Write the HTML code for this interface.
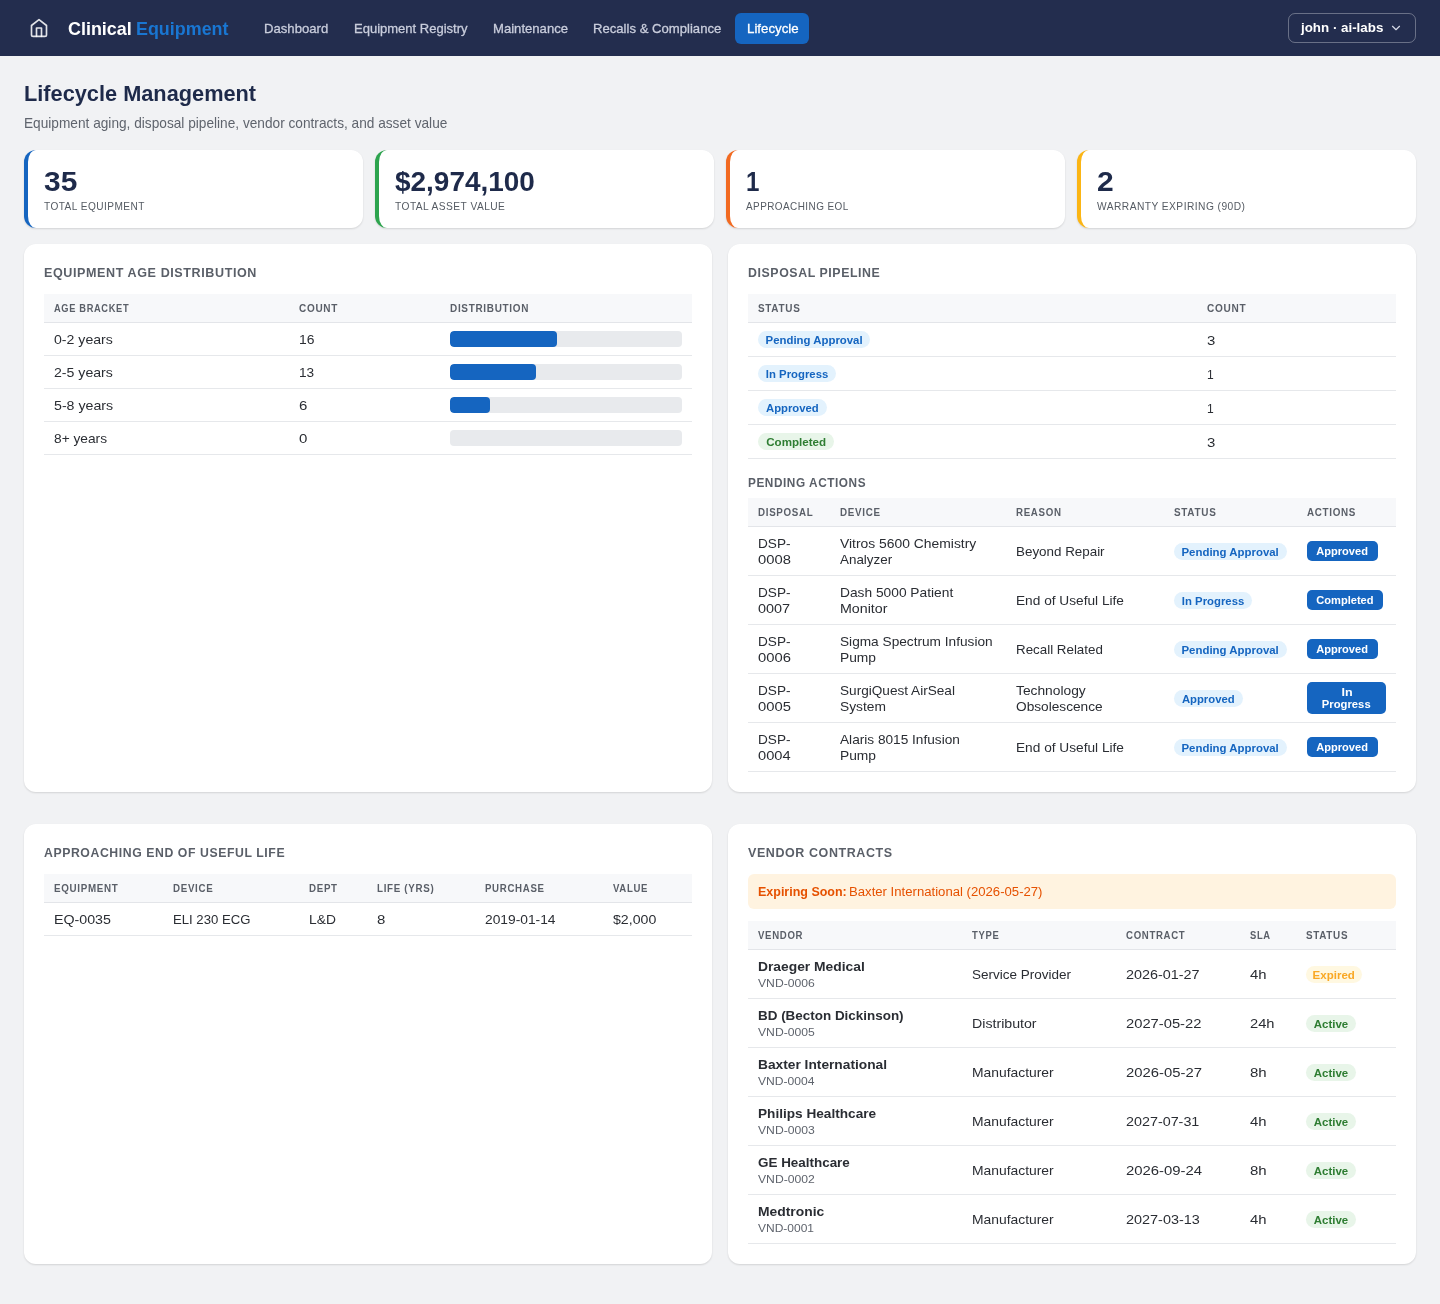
<!DOCTYPE html>
<html lang="en">
<head>
<meta charset="utf-8">
<title>Clinical Equipment - Lifecycle</title>
<style>
*{box-sizing:border-box;margin:0;padding:0}
html,body{width:1440px;height:1304px;overflow:hidden}
body{font-family:"Liberation Sans",sans-serif;background:#f1f2f4;color:#2a2d33;position:relative;font-size:13.4px;line-height:16px}
#root{position:absolute;left:0;top:0;width:1440px;height:1304px;will-change:transform}
.abs{position:absolute;white-space:nowrap}
.sx{display:inline-block;white-space:nowrap;transform-origin:0 50%}
.cx{display:inline-block;white-space:nowrap;transform-origin:50% 50%}
/* NAV */
.nav{position:absolute;left:0;top:0;width:1440px;height:56px;background:#232d4e}
.nav .home{position:absolute;left:29px;top:18px;width:20px;height:20px}
.brand{left:68px;top:0;height:56px;line-height:56px;font-size:18.4px;font-weight:700;color:#fff}
.brand.bl{color:#1976d2}
.nl{top:0;height:56px;line-height:56px;font-size:13.33px;color:#c9cddc;-webkit-text-stroke:.3px #c9cddc}
.nact{position:absolute;left:735px;top:12.5px;width:74px;height:31.5px;border-radius:6px;background:#1565c0}
.user{position:absolute;left:1288px;top:13px;width:128px;height:30px;border:1px solid rgba(255,255,255,.32);border-radius:7px}
.user .ut{position:absolute;left:12px;top:0;line-height:28px;font-size:13.4px;font-weight:700;color:#fff;white-space:nowrap}
.user svg{position:absolute;left:100px;top:7px;width:14px;height:14px}
/* HEADINGS */
h1{position:absolute;left:24px;top:78px;font-size:22.4px;line-height:30px;font-weight:700;color:#1e2a4a;white-space:nowrap}
.sub{left:24px;top:114px;font-size:14.3px;line-height:16px;color:#5f646d}
/* STAT CARDS */
.stat{position:absolute;top:150px;width:339px;height:78px;background:#fff;border-radius:12px;border-left:4px solid #1565c0;box-shadow:0 1px 2px rgba(0,0,0,.13)}
.stat .num{position:absolute;left:16px;top:14px;font-size:26.8px;line-height:32px;font-weight:700;color:#1e2a4a;white-space:nowrap}
.stat .lbl{position:absolute;left:16px;top:49px;font-size:10.2px;line-height:14px;color:#555b63;white-space:nowrap;letter-spacing:.45px}
/* CARDS */
.card{position:absolute;background:#fff;border-radius:12px;box-shadow:0 1px 2px rgba(0,0,0,.13)}
.card h3{position:absolute;left:20px;letter-spacing:.6px;font-size:12.8px;line-height:16px;font-weight:700;color:#5a5f68;white-space:nowrap}
table{position:absolute;left:20px;width:648px;border-collapse:separate;border-spacing:0;table-layout:fixed}
th{height:29px;background:#f7f8fa;border-bottom:1px solid #e3e5e9;letter-spacing:.7px;font-size:10px;font-weight:700;color:#5a5f68;text-align:left;padding:0 10px;vertical-align:middle;white-space:nowrap}
td{border-bottom:1px solid #e6e8eb;padding:0 10px;vertical-align:middle;font-size:13.4px;line-height:16px;color:#2a2d33;white-space:nowrap}
tr.r33 td{height:33px}
tr.r34 td{height:34px}
tr.r49 td{height:49px}
.bar{width:232px;height:16px;border-radius:4px;background:#e8eaed;overflow:hidden}
.bar i{display:block;height:16px;background:#1565c0;border-radius:4px}
.bdg{display:inline-block;height:17px;line-height:17px;border-radius:9px;font-size:11.3px;font-weight:700;white-space:nowrap;vertical-align:middle;text-align:center}
.b-blue{background:#e3f2fd;color:#1565c0}
.b-green{background:#e8f5e9;color:#2e7d32}
.b-yel{background:#fff8e1;color:#f9a825}
.btn{display:inline-block;background:#1565c0;color:#fff;font-size:11.2px;font-weight:700;line-height:12.5px;padding:3.5px 0;border-radius:5px;text-align:center;vertical-align:middle}
.vn{font-weight:700;display:block;line-height:16px}
.vs{display:block;font-size:11.2px;line-height:16px;color:#5f646d}
.alert{position:absolute;left:20px;top:50px;width:648px;height:34.5px;border-radius:6px;background:#fff3e0;color:#e65100;font-size:12.3px;line-height:34.5px;padding:0 10px;white-space:nowrap}
</style>
</head>
<body>
<div id="root">
<div class="nav">
  <svg class="home" viewBox="0 0 24 24" fill="none" stroke="rgba(255,255,255,.87)" stroke-width="2" stroke-linecap="round" stroke-linejoin="round"><path d="m3 9 9-7 9 7v11a2 2 0 0 1-2 2H5a2 2 0 0 1-2-2z"/><polyline points="9 22 9 12 15 12 15 22"/></svg>
  <div class="abs brand" style="left:68px"><span class="sx" style="transform:translateY(1px) scaleX(0.9748)">Clinical</span></div>
  <div class="abs brand bl" style="left:136px"><span class="sx" style="transform:translateY(1px) scaleX(0.9733)">Equipment</span></div>
  <div class="abs nl" style="left:264px"><span class="sx" style="transform:translateY(1px) scaleX(0.9843)">Dashboard</span></div>
  <div class="abs nl" style="left:353.5px"><span class="sx" style="transform:translateY(1px) scaleX(0.9761)">Equipment Registry</span></div>
  <div class="abs nl" style="left:493px"><span class="sx" style="transform:translateY(1px) scaleX(0.9833)">Maintenance</span></div>
  <div class="abs nl" style="left:593px"><span class="sx" style="transform:translateY(1px) scaleX(0.9841)">Recalls &amp; Compliance</span></div>
  <div class="nact"></div>
  <div class="abs nl" style="left:746.5px;color:#fff;-webkit-text-stroke-color:#fff"><span class="sx" style="transform:translateY(1px) scaleX(0.9950)">Lifecycle</span></div>
  <div class="user"><span class="ut"><span class="sx" style="transform:scaleX(0.9970)">john &middot; ai-labs</span></span><svg viewBox="0 0 24 24" fill="none" stroke="#d5d9e6" stroke-width="2" stroke-linecap="round" stroke-linejoin="round"><path d="m6 9 6 6 6-6"/></svg></div>
</div>

<h1><span class="sx" style="transform:translateY(1px) scaleX(0.9715)">Lifecycle Management</span></h1>
<div class="abs sub"><span class="sx" style="transform:translateY(1px) scaleX(0.9563)">Equipment aging, disposal pipeline, vendor contracts, and asset value</span></div>

<div class="stat" style="left:24px"><div class="num"><span class="sx" style="transform:translateY(1.5px) scaleX(1.1158)">35</span></div><div class="lbl"><span class="sx" style="transform:translateY(1px) scaleX(0.9926)">TOTAL EQUIPMENT</span></div></div>
<div class="stat" style="left:375px;border-left-color:#2da44e"><div class="num"><span class="sx" style="transform:translateY(1.5px) scaleX(1.0433)">$2,974,100</span></div><div class="lbl"><span class="sx" style="transform:translateY(1px) scaleX(1.0023)">TOTAL ASSET VALUE</span></div></div>
<div class="stat" style="left:726px;border-left-color:#f26a21"><div class="num"><span class="sx" style="transform:translateY(1.5px) scaleX(0.9000)">1</span></div><div class="lbl"><span class="sx" style="transform:translateY(1px) scaleX(0.9761)">APPROACHING EOL</span></div></div>
<div class="stat" style="left:1077px;border-left-color:#fbb514"><div class="num"><span class="sx" style="transform:translateY(1.5px) scaleX(1.1200)">2</span></div><div class="lbl"><span class="sx" style="transform:translateY(1px) scaleX(1.0034)">WARRANTY EXPIRING (90D)</span></div></div>

<!-- CARD 1 -->
<div class="card" style="left:24px;top:244px;width:688px;height:548px">
  <h3 style="top:20px"><span class="sx" style="transform:translateY(1px) scaleX(0.9814)">EQUIPMENT AGE DISTRIBUTION</span></h3>
  <table style="top:50px">
    <colgroup><col style="width:245px"><col style="width:151px"><col style="width:252px"></colgroup>
    <tr><th><span class="sx" style="transform:translateY(1px) scaleX(0.9281)">AGE BRACKET</span></th><th><span class="sx" style="transform:translateY(1px) scaleX(1.0000)">COUNT</span></th><th><span class="sx" style="transform:translateY(1px) scaleX(0.9948)">DISTRIBUTION</span></th></tr>
    <tr class="r33"><td><span class="sx" style="transform:translateY(1px) scaleX(1.0548)">0-2 years</span></td><td><span class="sx" style="transform:translateY(1px) scaleX(1.0377)">16</span></td><td><div class="bar"><i style="width:107px"></i></div></td></tr>
    <tr class="r33"><td><span class="sx" style="transform:translateY(1px) scaleX(1.0550)">2-5 years</span></td><td><span class="sx" style="transform:translateY(1px) scaleX(1.0189)">13</span></td><td><div class="bar"><i style="width:86px"></i></div></td></tr>
    <tr class="r33"><td><span class="sx" style="transform:translateY(1px) scaleX(1.0594)">5-8 years</span></td><td><span class="sx" style="transform:translateY(1px) scaleX(1.1200)">6</span></td><td><div class="bar"><i style="width:40px"></i></div></td></tr>
    <tr class="r33"><td><span class="sx" style="transform:translateY(1px) scaleX(1.0246)">8+ years</span></td><td><span class="sx" style="transform:translateY(1px) scaleX(1.1200)">0</span></td><td><div class="bar"></div></td></tr>
  </table>
</div>

<!-- CARD 2 -->
<div class="card" style="left:728px;top:244px;width:688px;height:548px">
  <h3 style="top:20px"><span class="sx" style="transform:translateY(1px) scaleX(0.9649)">DISPOSAL PIPELINE</span></h3>
  <table style="top:50px">
    <colgroup><col style="width:449px"><col style="width:199px"></colgroup>
    <tr><th><span class="sx" style="transform:translateY(1px) scaleX(0.9940)">STATUS</span></th><th><span class="sx" style="transform:translateY(1px) scaleX(1.0066)">COUNT</span></th></tr>
    <tr class="r34"><td><span class="bdg b-blue" style="width:111.5px"><span class="cx" style="transform:translateY(1px) scaleX(1.0079)">Pending Approval</span></span></td><td><span class="sx" style="transform:translateY(1px) scaleX(1.1154)">3</span></td></tr>
    <tr class="r34"><td><span class="bdg b-blue" style="width:77.5px"><span class="cx" style="transform:translateY(1px) scaleX(1.0041)">In Progress</span></span></td><td><span class="sx" style="transform:translateY(1px) scaleX(0.9000)">1</span></td></tr>
    <tr class="r34"><td><span class="bdg b-blue" style="width:68.75px"><span class="cx" style="transform:translateY(1px) scaleX(1.0000)">Approved</span></span></td><td><span class="sx" style="transform:translateY(1px) scaleX(0.9000)">1</span></td></tr>
    <tr class="r34"><td><span class="bdg b-green" style="width:75.75px"><span class="cx" style="transform:translateY(1px) scaleX(1.0262)">Completed</span></span></td><td><span class="sx" style="transform:translateY(1px) scaleX(1.1154)">3</span></td></tr>
  </table>
  <h3 style="top:230px"><span class="sx" style="transform:translateY(1px) scaleX(0.9228)">PENDING ACTIONS</span></h3>
  <table style="top:254px">
    <colgroup><col style="width:82px"><col style="width:176px"><col style="width:158px"><col style="width:133px"><col style="width:99px"></colgroup>
    <tr><th><span class="sx" style="transform:translateY(1px) scaleX(0.9773)">DISPOSAL</span></th><th><span class="sx" style="transform:translateY(1px) scaleX(0.9811)">DEVICE</span></th><th><span class="sx" style="transform:translateY(1px) scaleX(0.9722)">REASON</span></th><th><span class="sx" style="transform:translateY(1px) scaleX(0.9940)">STATUS</span></th><th><span class="sx" style="transform:translateY(1px) scaleX(0.9845)">ACTIONS</span></th></tr>
    <tr class="r49"><td><span class="sx" style="transform:translateY(1px) scaleX(1.0164)">DSP-</span><br><span class="sx" style="transform:translateY(1px) scaleX(1.1043)">0008</span></td><td><span class="sx" style="transform:translateY(1px) scaleX(1.0361)">Vitros 5600 Chemistry</span><br><span class="sx" style="transform:translateY(1px) scaleX(1.0000)">Analyzer</span></td><td><span class="sx" style="transform:translateY(1px) scaleX(1.0000)">Beyond Repair</span></td><td><span class="bdg b-blue" style="width:112.5px"><span class="cx" style="transform:translateY(1px) scaleX(1.0106)">Pending Approval</span></span></td><td><span class="btn" style="width:71px"><span class="cx" style="transform:scaleX(0.9902)">Approved</span></span></td></tr>
    <tr class="r49"><td><span class="sx" style="transform:translateY(1px) scaleX(1.0164)">DSP-</span><br><span class="sx" style="transform:translateY(1px) scaleX(1.0783)">0007</span></td><td><span class="sx" style="transform:translateY(1px) scaleX(1.0275)">Dash 5000 Patient</span><br><span class="sx" style="transform:translateY(1px) scaleX(1.0632)">Monitor</span></td><td><span class="sx" style="transform:translateY(1px) scaleX(1.0216)">End of Useful Life</span></td><td><span class="bdg b-blue" style="width:77.5px"><span class="cx" style="transform:translateY(1px) scaleX(1.0041)">In Progress</span></span></td><td><span class="btn" style="width:76px"><span class="cx" style="transform:scaleX(0.9912)">Completed</span></span></td></tr>
    <tr class="r49"><td><span class="sx" style="transform:translateY(1px) scaleX(1.0164)">DSP-</span><br><span class="sx" style="transform:translateY(1px) scaleX(1.1043)">0006</span></td><td><span class="sx" style="transform:translateY(1px) scaleX(1.0202)">Sigma Spectrum Infusion</span><br><span class="sx" style="transform:translateY(1px) scaleX(1.0299)">Pump</span></td><td><span class="sx" style="transform:translateY(1px) scaleX(0.9971)">Recall Related</span></td><td><span class="bdg b-blue" style="width:112.5px"><span class="cx" style="transform:translateY(1px) scaleX(1.0106)">Pending Approval</span></span></td><td><span class="btn" style="width:71px"><span class="cx" style="transform:scaleX(0.9902)">Approved</span></span></td></tr>
    <tr class="r49"><td><span class="sx" style="transform:translateY(1px) scaleX(1.0164)">DSP-</span><br><span class="sx" style="transform:translateY(1px) scaleX(1.1043)">0005</span></td><td><span class="sx" style="transform:translateY(1px) scaleX(1.0157)">SurgiQuest AirSeal</span><br><span class="sx" style="transform:translateY(1px) scaleX(1.0289)">System</span></td><td><span class="sx" style="transform:translateY(1px) scaleX(1.0296)">Technology</span><br><span class="sx" style="transform:translateY(1px) scaleX(1.0209)">Obsolescence</span></td><td><span class="bdg b-blue" style="width:68.5px"><span class="cx" style="transform:translateY(1px) scaleX(1.0000)">Approved</span></span></td><td><span class="btn" style="width:79px"><span class="cx" style="transform:scaleX(1.1200)">In</span><br><span class="cx" style="transform:scaleX(1.0053)">Progress</span></span></td></tr>
    <tr class="r49"><td><span class="sx" style="transform:translateY(1px) scaleX(1.0164)">DSP-</span><br><span class="sx" style="transform:translateY(1px) scaleX(1.0948)">0004</span></td><td><span class="sx" style="transform:translateY(1px) scaleX(1.0193)">Alaris 8015 Infusion</span><br><span class="sx" style="transform:translateY(1px) scaleX(1.0299)">Pump</span></td><td><span class="sx" style="transform:translateY(1px) scaleX(1.0216)">End of Useful Life</span></td><td><span class="bdg b-blue" style="width:112.5px"><span class="cx" style="transform:translateY(1px) scaleX(1.0106)">Pending Approval</span></span></td><td><span class="btn" style="width:71px"><span class="cx" style="transform:scaleX(0.9902)">Approved</span></span></td></tr>
  </table>
</div>

<!-- CARD 3 -->
<div class="card" style="left:24px;top:824px;width:688px;height:440px">
  <h3 style="top:20px"><span class="sx" style="transform:translateY(1px) scaleX(0.9581)">APPROACHING END OF USEFUL LIFE</span></h3>
  <table style="top:50px">
    <colgroup><col style="width:119px"><col style="width:136px"><col style="width:68px"><col style="width:108px"><col style="width:128px"><col style="width:89px"></colgroup>
    <tr><th><span class="sx" style="transform:translateY(1px) scaleX(0.9805)">EQUIPMENT</span></th><th><span class="sx" style="transform:translateY(1px) scaleX(0.9748)">DEVICE</span></th><th><span class="sx" style="transform:translateY(1px) scaleX(0.9732)">DEPT</span></th><th><span class="sx" style="transform:translateY(1px) scaleX(0.9780)">LIFE (YRS)</span></th><th><span class="sx" style="transform:translateY(1px) scaleX(0.9667)">PURCHASE</span></th><th><span class="sx" style="transform:translateY(1px) scaleX(0.9577)">VALUE</span></th></tr>
    <tr class="r33"><td><span class="sx" style="transform:translateY(1px) scaleX(1.0625)">EQ-0035</span></td><td><span class="sx" style="transform:translateY(1px) scaleX(0.9805)">ELI 230 ECG</span></td><td><span class="sx" style="transform:translateY(1px) scaleX(1.0306)">L&amp;D</span></td><td><span class="sx" style="transform:translateY(1px) scaleX(1.1200)">8</span></td><td><span class="sx" style="transform:translateY(1px) scaleX(1.0296)">2019-01-14</span></td><td><span class="sx" style="transform:translateY(1px) scaleX(1.0559)">$2,000</span></td></tr>
  </table>
</div>

<!-- CARD 4 -->
<div class="card" style="left:728px;top:824px;width:688px;height:440px">
  <h3 style="top:20px"><span class="sx" style="transform:translateY(1px) scaleX(0.9762)">VENDOR CONTRACTS</span></h3>
  <div class="alert"><b><span class="sx" style="transform:translateY(1px) scaleX(1.0146)">Expiring Soon:</span></b><span style="position:absolute;left:101px;top:0"><span class="sx" style="transform:translateY(1px) scaleX(1.0682)">Baxter International (2026-05-27)</span></span></div>
  <table style="top:97px">
    <colgroup><col style="width:214px"><col style="width:154px"><col style="width:124px"><col style="width:56px"><col style="width:100px"></colgroup>
    <tr><th><span class="sx" style="transform:translateY(1px) scaleX(0.9620)">VENDOR</span></th><th><span class="sx" style="transform:translateY(1px) scaleX(0.9464)">TYPE</span></th><th><span class="sx" style="transform:translateY(1px) scaleX(0.9630)">CONTRACT</span></th><th><span class="sx" style="transform:translateY(1px) scaleX(0.9405)">SLA</span></th><th><span class="sx" style="transform:translateY(1px) scaleX(0.9880)">STATUS</span></th></tr>
    <tr class="r49"><td><span class="vn"><span class="sx" style="transform:translateY(1px) scaleX(1.0319)">Draeger Medical</span></span><span class="vs"><span class="sx" style="transform:translateY(1px) scaleX(1.0870)">VND-0006</span></span></td><td><span class="sx" style="transform:translateY(1px) scaleX(1.0077)">Service Provider</span></td><td><span class="sx" style="transform:translateY(1px) scaleX(1.0743)">2026-01-27</span></td><td><span class="sx" style="transform:translateY(1px) scaleX(1.1091)">4h</span></td><td><span class="bdg b-yel" style="width:56.25px"><span class="cx" style="transform:translateY(1px) scaleX(1.0188)">Expired</span></span></td></tr>
    <tr class="r49"><td><span class="vn"><span class="sx" style="transform:translateY(1px) scaleX(1.0035)">BD (Becton Dickinson)</span></span><span class="vs"><span class="sx" style="transform:translateY(1px) scaleX(1.0870)">VND-0005</span></span></td><td><span class="sx" style="transform:translateY(1px) scaleX(1.0586)">Distributor</span></td><td><span class="sx" style="transform:translateY(1px) scaleX(1.1004)">2027-05-22</span></td><td><span class="sx" style="transform:translateY(1px) scaleX(1.0964)">24h</span></td><td><span class="bdg b-green" style="width:49.5px"><span class="cx" style="transform:translateY(1px) scaleX(1.0150)">Active</span></span></td></tr>
    <tr class="r49"><td><span class="vn"><span class="sx" style="transform:translateY(1px) scaleX(1.0262)">Baxter International</span></span><span class="vs"><span class="sx" style="transform:translateY(1px) scaleX(1.0817)">VND-0004</span></span></td><td><span class="sx" style="transform:translateY(1px) scaleX(1.0354)">Manufacturer</span></td><td><span class="sx" style="transform:translateY(1px) scaleX(1.1078)">2026-05-27</span></td><td><span class="sx" style="transform:translateY(1px) scaleX(1.1200)">8h</span></td><td><span class="bdg b-green" style="width:49.5px"><span class="cx" style="transform:translateY(1px) scaleX(1.0150)">Active</span></span></td></tr>
    <tr class="r49"><td><span class="vn"><span class="sx" style="transform:translateY(1px) scaleX(1.0174)">Philips Healthcare</span></span><span class="vs"><span class="sx" style="transform:translateY(1px) scaleX(1.0870)">VND-0003</span></span></td><td><span class="sx" style="transform:translateY(1px) scaleX(1.0354)">Manufacturer</span></td><td><span class="sx" style="transform:translateY(1px) scaleX(1.0706)">2027-07-31</span></td><td><span class="sx" style="transform:translateY(1px) scaleX(1.1091)">4h</span></td><td><span class="bdg b-green" style="width:49.5px"><span class="cx" style="transform:translateY(1px) scaleX(1.0150)">Active</span></span></td></tr>
    <tr class="r49"><td><span class="vn"><span class="sx" style="transform:translateY(1px) scaleX(1.0028)">GE Healthcare</span></span><span class="vs"><span class="sx" style="transform:translateY(1px) scaleX(1.0870)">VND-0002</span></span></td><td><span class="sx" style="transform:translateY(1px) scaleX(1.0354)">Manufacturer</span></td><td><span class="sx" style="transform:translateY(1px) scaleX(1.1111)">2026-09-24</span></td><td><span class="sx" style="transform:translateY(1px) scaleX(1.1200)">8h</span></td><td><span class="bdg b-green" style="width:49.5px"><span class="cx" style="transform:translateY(1px) scaleX(1.0150)">Active</span></span></td></tr>
    <tr class="r49"><td><span class="vn"><span class="sx" style="transform:translateY(1px) scaleX(1.0359)">Medtronic</span></span><span class="vs"><span class="sx" style="transform:translateY(1px) scaleX(1.0725)">VND-0001</span></span></td><td><span class="sx" style="transform:translateY(1px) scaleX(1.0354)">Manufacturer</span></td><td><span class="sx" style="transform:translateY(1px) scaleX(1.0781)">2027-03-13</span></td><td><span class="sx" style="transform:translateY(1px) scaleX(1.1091)">4h</span></td><td><span class="bdg b-green" style="width:49.5px"><span class="cx" style="transform:translateY(1px) scaleX(1.0150)">Active</span></span></td></tr>
  </table>
</div>
</div>
</body>
</html>
